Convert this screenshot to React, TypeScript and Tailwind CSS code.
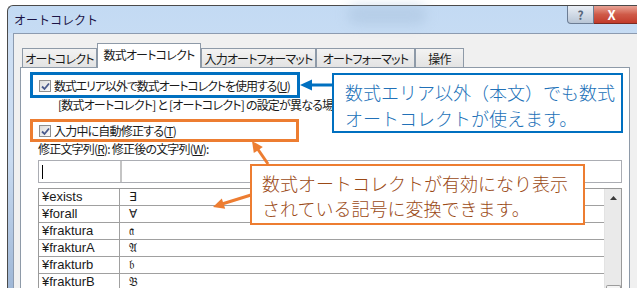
import React from "react";

const jp = "font-['Noto_Sans_CJK_JP','Noto_Sans',sans-serif]";

function CheckBox() {
  return (
    <span className="flex h-[12px] w-[12px] shrink-0 items-center justify-center border border-[#8f8f8f] bg-gradient-to-br from-[#dcdcdc] to-[#fbfbfb]">
      <svg width="9" height="9" viewBox="0 0 9 9">
        <path d="M1 4.5 L3.5 7 L8 1.5" fill="none" stroke="#4a5a8c" strokeWidth="1.8" />
      </svg>
    </span>
  );
}

function Tab({ label, active, w }: { label: string; active?: boolean; w: string }) {
  if (active) {
    return (
      <div className={`${w} relative z-10 flex h-[25px] items-center justify-center whitespace-nowrap border border-b-0 border-[#8e9aa8] bg-white pb-[2px] text-[12px] text-[#1a1a1a]`}>
        {label}
      </div>
    );
  }
  return (
    <div className={`${w} flex h-[20px] items-center justify-center whitespace-nowrap border border-b-0 border-[#8e9aa8] bg-gradient-to-b from-[#f3f3f3] to-[#e2e2e2] text-[12px] text-[#1a1a1a]`}>
      {label}
    </div>
  );
}

const rows = [
  { k: "¥exists", v: "∃" },
  { k: "¥forall", v: "∀" },
  { k: "¥fraktura", v: "𝔞" },
  { k: "¥frakturA", v: "𝔄" },
  { k: "¥frakturb", v: "𝔟" },
  { k: "¥frakturB", v: "𝔅" },
];

export default function App() {
  return (
    <div className={`relative h-[288px] w-[637px] overflow-hidden bg-white ${jp}`}>
      {/* window */}
      <div className="ml-[7px] mt-[5px] flex h-[283px] flex-col rounded-tl-[6px] border-l border-t border-[#4a4a4a] bg-gradient-to-b from-[#c3daf3] via-[#d2e3f6] to-[#b7cde6]">
        {/* title bar */}
        <div className="relative flex h-[27px] shrink-0 items-center pl-[6px]">
          <span className="text-[12px] text-[#1c1446]">オートコレクト</span>
          <div className="absolute top-[-1px] h-[20px] w-[80px] rounded-full bg-[#a9c2dd] opacity-50 blur-[6px]" style={{ right: 210 }} />
          <div className="ml-auto flex self-start">
            <div className="flex h-[18px] w-[27px] items-center justify-center rounded-bl-[4px] border border-t-0 border-[#6c7d94] bg-gradient-to-b from-[#e9eef5] to-[#b9c6d6] text-[12px] font-bold text-[#56657a]">
              ?
            </div>
            <div className="flex h-[18px] w-[43px] items-center justify-center border-b border-[#7b2a22] bg-gradient-to-b from-[#e8a295] via-[#cf5a48] to-[#c23a2a] pr-[8px] text-[13px] font-bold text-white">
              X
            </div>
          </div>
        </div>
        {/* body */}
        <div className="flex min-h-0 flex-1">
          <div className="w-[5px] shrink-0 bg-gradient-to-b from-[#cfe0f4] via-[#c9dbf1] to-[#9fb7d6]" />
          <div className="flex min-w-0 flex-1 flex-col border-l border-t border-[#8c9bb0] bg-[#f0f0f0] pt-[9px] tracking-[-0.8px] [font-feature-settings:'palt']">
            <div className="ml-[6px] flex flex-1 flex-col">
              <div className="-mb-px flex items-end pl-[2px]">
                <Tab label="オートコレクト" w="w-[75px]" />
                <Tab label="数式オートコレクト" w="w-[104px]" active />
                <Tab label="入力オートフォーマット" w="w-[115px]" />
                <Tab label="オートフォーマット" w="w-[99px]" />
                <Tab label="操作" w="w-[49px]" />
              </div>
              <div className="flex w-[610px] flex-1 flex-col border border-[#8e9aa8] bg-white pl-[17px] pr-[7px] text-[12px] text-[#1a1a1a]">
                <div className="mt-[10px] flex h-[16px] items-center gap-[3px] pl-[1px] tracking-[-1.1px]">
                  <CheckBox />
                  <span>
                    数式エリア以外で数式オートコレクトを使用する(<span className="underline">U</span>)
                  </span>
                </div>
                <div className="mt-[3px] flex h-[16px] items-center whitespace-nowrap pl-[20px]">
                  [数式オートコレクト] と [オートコレクト] の設定が異なる場合
                </div>
                <div className="mt-[10px] flex h-[16px] items-center gap-[3px] pl-[1px]">
                  <CheckBox />
                  <span>
                    入力中に自動修正する(<span className="underline">T</span>)
                  </span>
                </div>
                <div className="mt-[2px] flex h-[16px] items-center whitespace-nowrap">
                  修正文字列(<span className="underline">R</span>): 修正後の文字列(<span className="underline">W</span>):
                </div>
                <div className="mt-[3px] flex h-[23px] border border-[#abadb3]">
                  <div className="flex w-[83px] items-center border-r-2 border-[#c4c4c4] pl-[3px]">
                    <span className="h-[14px] w-px bg-black" />
                  </div>
                  <div className="flex-1" />
                </div>
                <div className="mt-[5px] flex flex-1 border border-b-0 border-[#9a9a9a] font-['Liberation_Sans','Noto_Sans',sans-serif] tracking-normal">
                  <div className="flex-1">
                    {rows.map((r) => (
                      <div key={r.k} className="flex h-[17px] border-b border-[#a0a0a0] text-[13px] leading-[16px]">
                        <div className="w-[81px] border-r border-[#a0a0a0] pl-[3px]">{r.k}</div>
                        <div className="flex-1 pl-[9px] font-['DejaVu_Sans','Noto_Sans',serif] text-[12px]">{r.v}</div>
                      </div>
                    ))}
                  </div>
                  <div className="flex w-[17px] flex-col items-center border-l border-[#e3e3e3] bg-[#eaeaea]">
                    <svg width="7" height="4" viewBox="0 0 7 4" className="mt-[7px]">
                      <path d="M0 4 L3.5 0 L7 4 Z" fill="#3a3a3a" />
                    </svg>
                    <div className="mt-auto h-[6px] w-[15px] rounded-t-[2px] border border-b-0 border-[#9c9c9c] bg-[#f4f4f4]" />
                  </div>
                </div>
              </div>
            </div>
          </div>
        </div>
      </div>

      {/* highlight boxes */}
      <div className="absolute left-[30px] top-[72px] h-[26px] w-[270px] border-[3px] border-[#0070c0]" />
      <div className="absolute left-[30px] top-[119px] h-[23px] w-[269px] border-[3px] border-[#ed7d31]" />

      {/* arrows */}
      <svg className="absolute left-0 top-0" width="637" height="288" viewBox="0 0 637 288">
        <line x1="333" y1="85" x2="310" y2="85" stroke="#0070c0" strokeWidth="3" />
        <polygon points="300,85 312,79.5 312,90.5" fill="#0070c0" />
        <line x1="268" y1="164" x2="257" y2="148" stroke="#ed7d31" strokeWidth="3" />
        <polygon points="252,141 262.8,146.9 253.8,153.1" fill="#ed7d31" />
        <line x1="251" y1="195" x2="222" y2="204" stroke="#ed7d31" strokeWidth="3" />
        <polygon points="213,207 225.2,208.8 221.8,198.4" fill="#ed7d31" />
      </svg>

      {/* callouts */}
      <div className="absolute left-[332px] top-[73px] h-[60px] w-[291px] border-2 border-[#0070c0] bg-white pl-[11px] pt-[4px] text-[18px] font-light leading-[26px] text-[#2171b8]">
        <div>数式エリア以外（本文）でも数式</div>
        <div>オートコレクトが使えます。</div>
      </div>
      <div className="absolute left-[250px] top-[164px] h-[61px] w-[335px] border-2 border-[#ed7d31] bg-white pl-[10px] pt-[5px] text-[18px] font-light leading-[25px] text-[#9b4a16]">
        <div>数式オートコレクトが有効になり表示</div>
        <div>されている記号に変換できます。</div>
      </div>
    </div>
  );
}
